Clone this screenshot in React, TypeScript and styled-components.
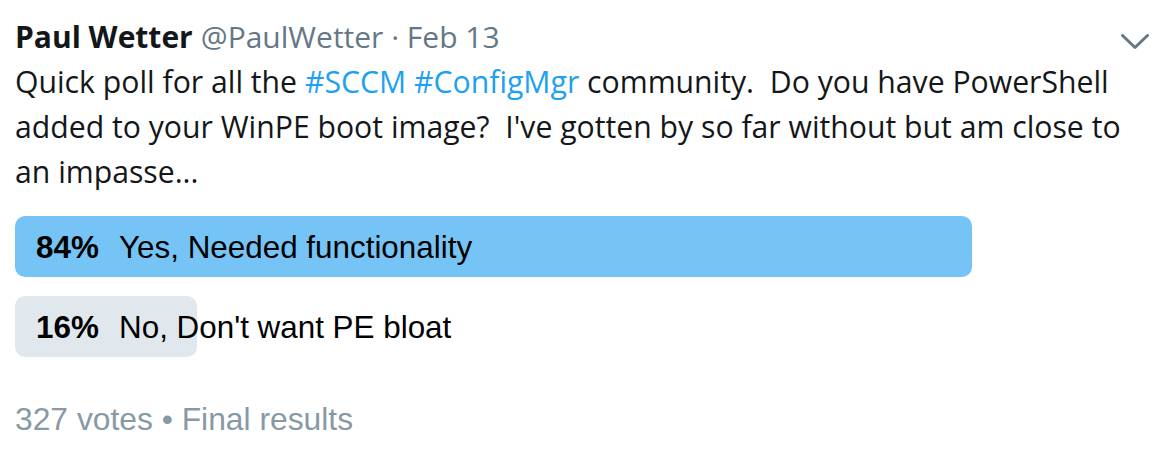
import React from "react";
import styled, { createGlobalStyle } from "styled-components";

const Global = createGlobalStyle`
  html, body { margin: 0; padding: 0; background: #ffffff; }
  body { width: 1165px; height: 456px; overflow: hidden; }
`;

const Tweet = styled.article`
  padding: 14px 0 0 15px;
  width: 1139px;
  font-family: "Open Sans", "Noto Sans", sans-serif;
  color: #14171a;
`;

const Header = styled.header`
  display: flex;
  align-items: baseline;
  font-size: 30px;
  line-height: 45px;
  white-space: nowrap;
`;

const Name = styled.span`
  font-weight: 700;
  color: #14171a;
`;

const Meta = styled.span`
  color: #657786;
  margin-left: 8px;
`;

const Caret = styled.button`
  margin-left: auto;
  margin-right: 3px;
  align-self: center;
  display: flex;
  align-items: center;
  justify-content: center;
  width: 32px;
  height: 24px;
  padding: 0;
  border: 0;
  background: none;
  position: relative;
  top: 5px;
`;

const Text = styled.p`
  margin: 0;
  font-size: 30.2px;
  line-height: 45px;
  white-space: pre-wrap;
`;

const Tag = styled.a`
  color: #1da1f2;
  text-decoration: none;
`;

const Poll = styled.div`
  margin-top: 22px;
  display: flex;
  flex-direction: column;
  gap: 19px;
  font-family: "Liberation Sans", Arial, sans-serif;
`;

const Choice = styled.div`
  position: relative;
  height: 61px;
  display: flex;
  align-items: center;
  padding: 3px 0 0 21px;
  box-sizing: border-box;
  font-size: 31.4px;
  color: #000000;
`;

const Bar = styled.div<{ $winner: boolean }>`
  position: absolute;
  left: 0;
  top: 0;
  bottom: 0;
  border-radius: 10px;
  background: ${(p) => (p.$winner ? "#76c4f5" : "#e1e8ed")};
`;

const Pct = styled.span`
  position: relative;
  width: 83px;
  font-weight: 700;
`;

const Label = styled.span`
  position: relative;
`;

const Footer = styled.div`
  margin-top: 42px;
  font-family: "Liberation Sans", Arial, sans-serif;
  font-size: 31.8px;
  line-height: 40px;
  color: #8899a6;
`;

const choices = [
  { pct: 84, label: "Yes, Needed functionality", winner: true },
  { pct: 16, label: "No, Don't want PE bloat", winner: false },
];

export default function App() {
  return (
    <>
      <Global />
      <Tweet>
        <Header>
          <Name>Paul Wetter</Name>
          <Meta>@PaulWetter · Feb 13</Meta>
          <Caret aria-label="More">
            <svg width="28" height="16" viewBox="0 0 28 16" fill="none">
              <polyline
                points="1.5,1.5 14,13.5 26.5,1.5"
                stroke="#657786"
                strokeWidth="3"
                strokeLinecap="round"
                strokeLinejoin="round"
              />
            </svg>
          </Caret>
        </Header>
        <Text>
          Quick poll for all the <Tag>#SCCM</Tag> <Tag>#ConfigMgr</Tag> community.  Do you have PowerShell
          <br />
          added to your WinPE boot image?  I've gotten by so far without but am close to
          <br />
          an impasse...
        </Text>
        <Poll>
          {choices.map((c) => (
            <Choice key={c.label}>
              <Bar $winner={c.winner} style={{ width: `${c.pct}%` }} />
              <Pct>{c.pct}%</Pct>
              <Label>{c.label}</Label>
            </Choice>
          ))}
        </Poll>
        <Footer>327 votes • Final results</Footer>
      </Tweet>
    </>
  );
}
